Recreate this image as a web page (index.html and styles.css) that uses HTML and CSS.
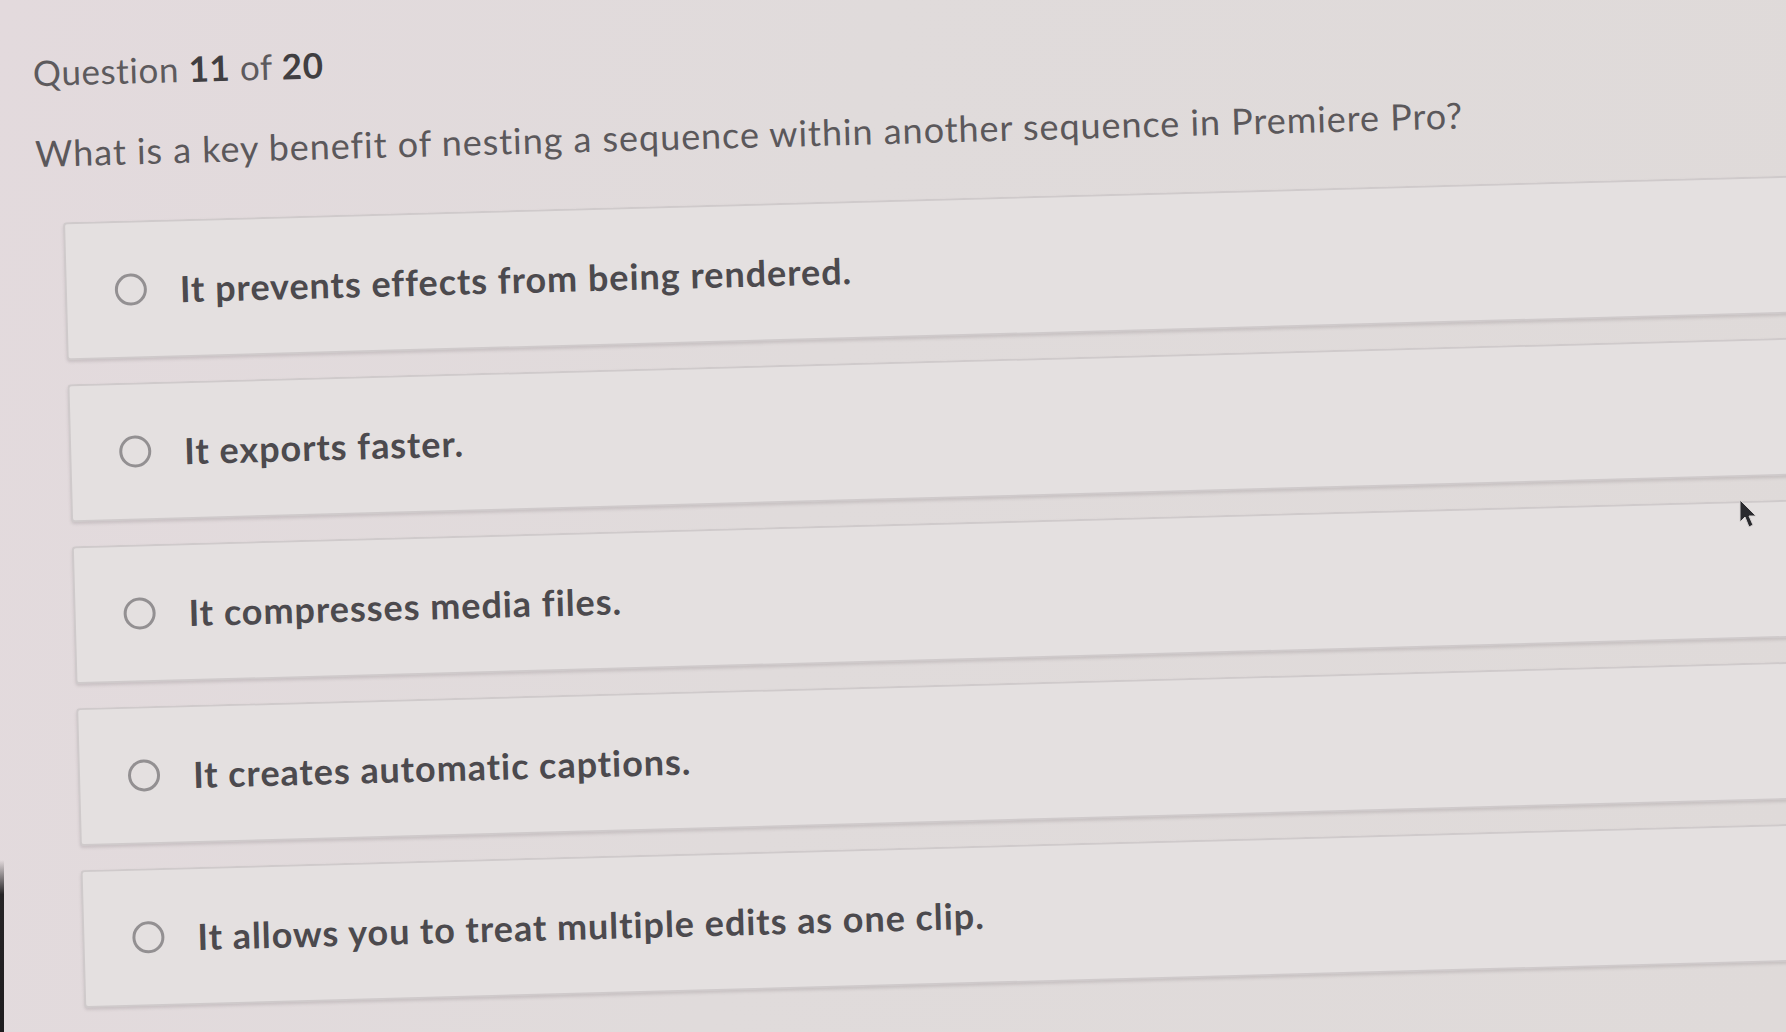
FILE: index.html
```html
<!DOCTYPE html>
<html lang="en">
<head>
<meta charset="utf-8">
<title>Question 11 of 20</title>
<link rel="stylesheet" href="styles.css">
</head>
<body>
<div class="screen">
  <main class="quiz">
    <div class="counter">Question <b>11</b> of <b>20</b></div>
    <h1 class="prompt">What is a key benefit of nesting a sequence within another sequence in Premiere Pro?</h1>
    <ul class="options">
      <li class="option"><span class="radio"></span><span class="label">It prevents effects from being rendered.</span></li>
      <li class="option"><span class="radio"></span><span class="label">It exports faster.</span></li>
      <li class="option"><span class="radio"></span><span class="label">It compresses media files.</span></li>
      <li class="option"><span class="radio"></span><span class="label">It creates automatic captions.</span></li>
      <li class="option"><span class="radio"></span><span class="label">It allows you to treat multiple edits as one clip.</span></li>
    </ul>
  </main>
  <div class="bezel"></div>
  <svg class="cursor" width="22" height="32" viewBox="0 0 22 32"><path d="M2 2 L2 24 L7 19 L11 29 L15 27 L11 18 L18 18 Z" fill="#2a2a2e" stroke="#d8d4d4" stroke-width="1"/></svg>
</div>
</body>
</html>
```
FILE: styles.css
```css
html, body {
  margin: 0;
  padding: 0;
  width: 1786px;
  height: 1032px;
  overflow: hidden;
}
body {
  background: linear-gradient(100deg, #e3dadd 0%, #e0dbdb 45%, #dfdad9 100%);
  font-family: "Lato", "Liberation Sans", sans-serif;
  color: #4a484b;
}
.screen {
  position: relative;
  width: 1786px;
  height: 1032px;
}
.quiz {
  transform: rotate(-1.55deg);
  transform-origin: 0 0;
  padding: 52px 0 0 31px;
  width: 1900px;
}
.counter {
  font-size: 35px;
  color: #5d5a5d;
  letter-spacing: 0.6px;
}
.counter b {
  font-weight: 700;
  color: #403e41;
}
.prompt {
  margin: 38px 0 0 0;
  font-size: 36px;
  font-weight: 400;
  color: #5b585b;
  letter-spacing: 0.95px;
}
.options {
  list-style: none;
  margin: 48px 0 0 26px;
  padding: 0;
  display: flex;
  flex-direction: column;
  gap: 24px;
}
.option {
  height: 138px;
  box-sizing: border-box;
  border: 2px solid #cfcacb;
  border-right: none;
  border-radius: 4px 0 0 4px;
  background: #e4e0e0;
  box-shadow: 0 2px 3px rgba(120, 110, 112, 0.22);
  display: flex;
  align-items: center;
  padding-left: 48px;
  gap: 33px;
}
.radio {
  width: 26px;
  height: 26px;
  border: 3px solid #939092;
  border-radius: 50%;
  flex: none;
}
.label {
  font-size: 36px;
  font-weight: 700;
  color: #4c4a4e;
  letter-spacing: 0.95px;
}
.cursor {
  position: absolute;
  left: 1738px;
  top: 498px;
}
.bezel {
  position: absolute;
  left: 0;
  top: 860px;
  width: 4px;
  height: 172px;
  background: linear-gradient(180deg, rgba(30, 28, 30, 0) 0%, #262426 20%, #1e1c1e 100%);
}
```
